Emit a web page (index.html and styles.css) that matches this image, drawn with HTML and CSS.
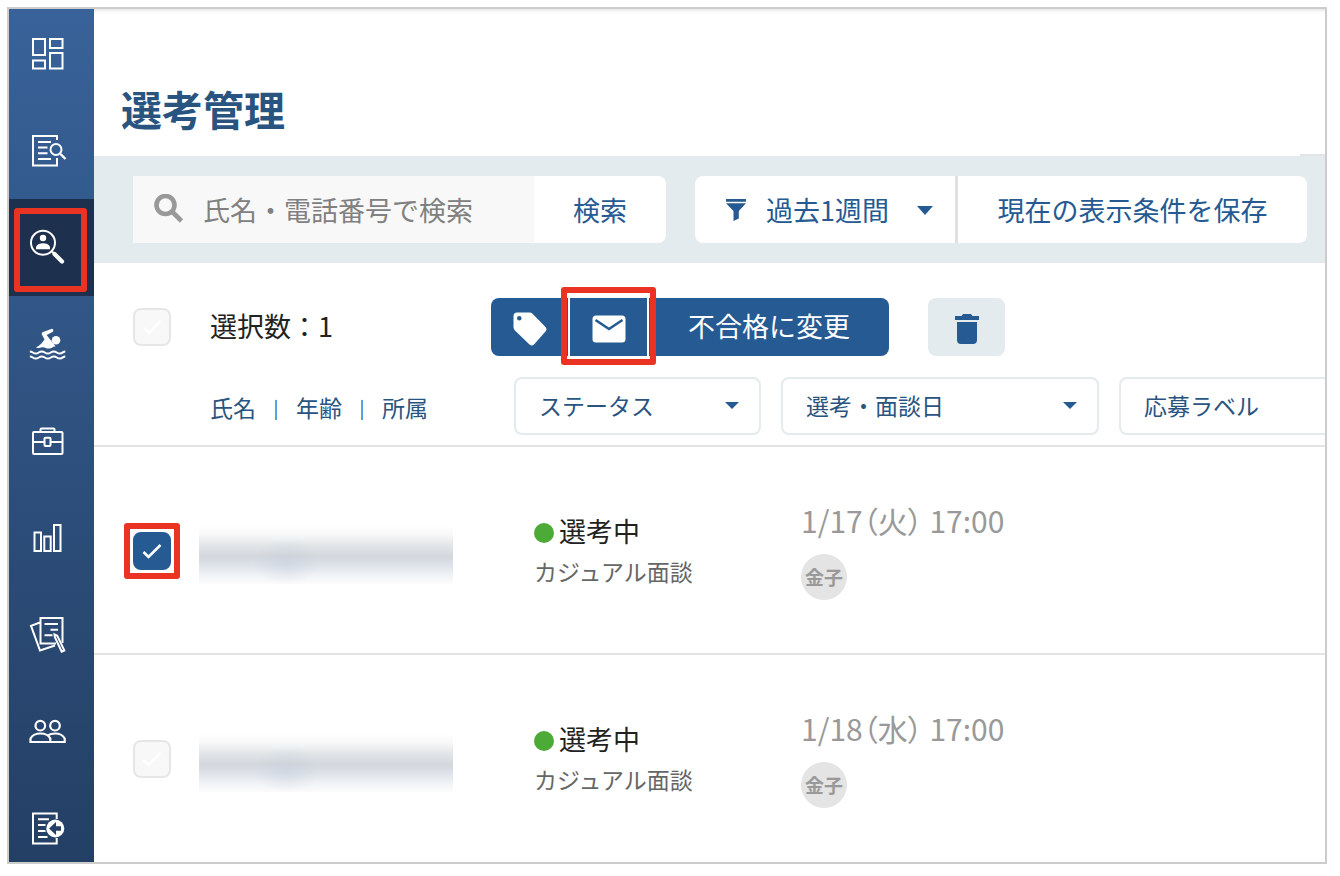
FILE: index.html
```html
<!DOCTYPE html>
<html lang="ja">
<head>
    <meta charset="UTF-8">
    <title>選考管理</title>
    <link rel="stylesheet" href="styles.css">
</head>
<body>
<div class="frame">
    <nav class="sidebar">
        <a href="#" class="nav-item" aria-label="ダッシュボード">
            <svg class="nav-icon" viewBox="0 0 38 39"><path d="M4 5h12v16H4zM21 5h12.500v9H21zM21 19h12.500v15.500H21zM4 26.500h12v8H4z"/></svg>
        </a>
        <a href="#" class="nav-item" aria-label="求人検索">
            <svg class="nav-icon" viewBox="0 0 38 39"><path d="M28 9V5H4v29.500h24V27M9 11h13M9 16.500h9.500M9 22.300h9.500M9 28h13"/><circle cx="27" cy="18.500" r="5.500"/><path d="M31.500 23l5 5" stroke-width="2.400"/></svg>
        </a>
        <a href="#" class="nav-item active" aria-label="選考管理">
            <svg class="nav-icon" viewBox="0 0 38 39"><circle cx="14" cy="14.700" r="12"/><circle class="solid" cx="14" cy="10" r="3.200"/><path class="solid" d="M7 21.200v-2.400c1-2.500 4-3.600 7-3.600s6 1.100 7 3.600v2.400z"/><path d="M23 23.500l2.500 2.500" stroke-width="2"/><path d="M25.500 26l7.500 7.500" stroke-width="4.200" stroke-linecap="round"/></svg>
            <span class="mark mark-nav"></span>
        </a>
        <a href="#" class="nav-item" aria-label="人材プール">
            <svg class="nav-icon" viewBox="0 0 38 39"><path class="solid" d="M23 3.800c1.600.4 1.800 2.400.6 3.100l-6 3 7.500 9.500 1.500 2.200c-2.500-.4-3.500 2-6.500 2-3.500 0-4-1.800-7-1.400-2 .3-3.500 1.200-6.100.5 2.500-2 5-2.800 8.500-8.200L13 9.800c-.7-1.300-.2-2.300 1-2.900z"/><circle class="solid" cx="27" cy="15.300" r="4.300"/><path d="M.800 26.500c3 0 3 2 6 2s3-2 6-2 3 2 6 2 3-2 6-2 3 2 6 2 3-2 5.500-2M.800 31.500c3 0 3 2 6 2s3-2 6-2 3 2 6 2 3-2 6-2 3 2 6 2 3-2 5.500-2"/></svg>
        </a>
        <a href="#" class="nav-item" aria-label="求人">
            <svg class="nav-icon" viewBox="0 0 38 39"><rect x="4" y="10" width="29.500" height="22" rx="1"/><path d="M11.500 10V7.500q0-1 1-1h12q1 0 1 1V10M4 20h11.500M21.500 20h12"/><rect x="15.500" y="15.800" width="6" height="8.200" rx="1"/></svg>
        </a>
        <a href="#" class="nav-item" aria-label="レポート">
            <svg class="nav-icon" viewBox="0 0 38 39"><path d="M5.500 13.500H12V32H5.500zM15.300 17.500h6.400V32h-6.400zM25 6h6.500v26H25z"/></svg>
        </a>
        <a href="#" class="nav-item" aria-label="評価シート">
            <svg class="nav-icon" viewBox="0 0 38 39"><path d="M27 27.500H11.500V2h22v25M11 6.500L2 9.800l9 24.700 15-5M15.500 8H29M21.500 13.700H29M15.500 19.300h8"/><path d="M25.500 18.500l2.800 1.300 7 14.600-2.600 1.200-6.800-14.300z"/></svg>
        </a>
        <a href="#" class="nav-item" aria-label="メンバー">
            <svg class="nav-icon" viewBox="0 0 38 39"><g stroke-width="2.200"><circle cx="11.300" cy="12.700" r="4.800"/><circle cx="26" cy="12.700" r="4.800"/><path d="M1.500 29h19.800v-3.500c-1.500-3-5.500-5-9.800-5s-8.500 2-10 5zM21.300 29h14.400v-3.500c-1.500-3-5.300-5-9.700-5-3 0-5.500.8-7.500 2.200"/></g></svg>
        </a>
        <a href="#" class="nav-item" aria-label="エントリー">
            <svg class="nav-icon" viewBox="0 0 38 39"><path d="M27.700 9V3.500H4v30h23.700V28M9 9.300h11M9 15h7.500M9 21h7.500M9 27h9.500"/><circle class="solid" cx="26.300" cy="18.500" r="9"/><path fill="#243f66" stroke="none" d="M20 18.500l7-6.500v4.200h5v4.600h-5V25z"/></svg>
        </a>
    </nav>

    <main class="main">
        <header class="page-head">
            <h1 class="page-title">選考管理</h1>
        </header>

        <div class="toolbar">
            <form class="search">
                <label class="search-field">
                    <svg class="search-icon" viewBox="0 0 32 32"><circle cx="12.500" cy="11" r="9"/><path d="M19 17.500l9.500 9.500"/></svg>
                    <input class="search-input" type="text" placeholder="氏名・電話番号で検索" aria-label="検索キーワード">
                </label>
                <button type="button" class="search-btn">検索</button>
            </form>
            <div class="period-group">
                <label class="period">
                    <svg class="filter-icon" viewBox="0 0 22 24"><path d="M1 1h20v2.800H1zM1 5.200h20L13.800 13v7.500L8.500 23V13z"/></svg>
                    <select class="period-select" aria-label="期間"><option>過去1週間</option></select>
                    <svg class="caret caret-lg" viewBox="0 0 16 9"><path d="M0 0h16L8 9z"/></svg>
                </label>
                <button type="button" class="save-btn">現在の表示条件を保存</button>
            </div>
        </div>

        <section class="list-head">
            <div class="columns">
                <label class="check"><input type="checkbox" aria-label="すべて選択"><svg viewBox="0 0 38 38"><path d="M11 20l5 5 11.500-12"/></svg></label>
                <div class="count">選択数：1</div>
                <div class="actions">
                    <div class="btn-group">
                        <button type="button" class="btn btn-icon" aria-label="ラベル">
                            <svg width="34" height="34" viewBox="0 0 34 34"><path fill="#fff" fill-rule="evenodd" d="M4 .5h12.500q1.800 0 3 1.200L32.500 15q2 2.300 0 4.500L21 32.500q-2.200 2-4.500 0L1.700 18.300Q.5 17 .5 15.300V4Q.5.500 4 .500zM6.300 4a2.300 2.300 0 1 0 .01 4.600A2.300 2.300 0 1 0 6.300 4z"/></svg>
                        </button>
                        <button type="button" class="btn btn-icon" aria-label="メール">
                            <svg width="34" height="28" viewBox="0 0 34 28"><rect x=".5" y=".5" width="33" height="27" rx="3.500" fill="#fff"/><path d="M3.500 5L17 14 30.500 5" fill="none" stroke="#255a92" stroke-width="2.600"/></svg>
                            <span class="mark mark-mail"></span>
                        </button>
                        <button type="button" class="btn btn-text">不合格に変更</button>
                    </div>
                    <button type="button" class="btn-trash" aria-label="削除">
                        <svg width="24" height="30" viewBox="0 0 24 30"><path fill="#255a92" d="M8 0h8l1.500 2H24v4H0V2h6.500zM2 8h20v18q0 4-4 4H6q-4 0-4-4z"/></svg>
                    </button>
                </div>
            </div>
            <div class="columns">
                <div class="person-head">氏名<span class="sep">|</span>年齢<span class="sep">|</span>所属</div>
                <label class="filter">
                    <select class="filter-select" aria-label="ステータス"><option>ステータス</option></select>
                    <svg class="caret" viewBox="0 0 14 7"><path d="M0 0h14L7 7z"/></svg>
                </label>
                <label class="filter">
                    <select class="filter-select" aria-label="選考・面談日"><option>選考・面談日</option></select>
                    <svg class="caret" viewBox="0 0 14 7"><path d="M0 0h14L7 7z"/></svg>
                </label>
                <label class="filter filter-label">
                    <select class="filter-select" aria-label="応募ラベル"><option>応募ラベル</option></select>
                </label>
            </div>
        </section>

        <section class="row columns">
            <label class="check"><input type="checkbox" checked aria-label="候補者を選択"><svg viewBox="0 0 38 38"><path d="M10.500 20l5 5L27.500 13"/></svg><span class="mark mark-check"></span></label>
            <div class="masked"></div>
            <div class="status">
                <div class="status-name"><span class="dot"></span>選考中</div>
                <div class="status-step">カジュアル面談</div>
            </div>
            <div class="schedule">
                <div class="date">1/17（火） 17:00</div>
                <div class="avatar">金子</div>
            </div>
        </section>

        <section class="row columns">
            <label class="check"><input type="checkbox" aria-label="候補者を選択"><svg viewBox="0 0 38 38"><path d="M10.500 20l5 5L27.500 13"/></svg></label>
            <div class="masked"></div>
            <div class="status">
                <div class="status-name"><span class="dot"></span>選考中</div>
                <div class="status-step">カジュアル面談</div>
            </div>
            <div class="schedule">
                <div class="date">1/18（水） 17:00</div>
                <div class="avatar">金子</div>
            </div>
        </section>
    </main>
</div>
</body>
</html>
```
FILE: styles.css
```css
*{
    box-sizing: border-box;
    margin: 0;
    padding: 0;
}
body{
    padding: 7px 13px 13px 7px;
    background: #fff;
    color: #222;
    font-family: "Noto Sans CJK JP", sans-serif;
    font-size: 27px;
    line-height: 40px;
}
button, input, select{
    border: 0;
    font: inherit;
    color: inherit;
    background: none;
}
select{
    appearance: none;
    cursor: pointer;
}
.frame{
    display: flex;
    border: 2px solid #ccc;
    overflow: hidden;
}

/* sidebar */
.sidebar{
    flex: none;
    width: 85px;
    contain: size;
    overflow: hidden;
    background: linear-gradient(#386299, #243f64);
}
.nav-item{
    position: relative;
    display: flex;
    align-items: center;
    justify-content: center;
    height: 97px;
    padding-right: 7px;
}
.nav-item:first-child{
    margin-top: -4px;
}
.nav-item.active{
    background: #1d304d;
}
.nav-icon{
    width: 38px;
    height: 39px;
    fill: none;
    stroke: #fff;
    stroke-width: 2;
}
.nav-icon .solid{
    fill: #fff;
    stroke: none;
}

/* red marks */
.mark{
    position: absolute;
    border: 6px solid #eb3323;
    border-radius: 3px;
}
.mark-nav{
    inset: 9px 7px 4px 5px;
}
.mark-mail{
    inset: -11px -9px -9px;
    z-index: 1;
}
.mark-check{
    inset: -9px;
}

.main{
    flex: 1;
    min-width: 0;
    overflow: hidden;
}
.page-head{
    height: 147px;
    padding: 69px 27px 0;
    box-shadow: inset 0 4px 4px -3px #ddd;
}
.page-title{
    font-size: 41px;
    line-height: 60px;
    font-weight: bold;
    color: #29547f;
}

.toolbar{
    position: relative;
    display: flex;
    gap: 29px;
    padding: 20px 18px 20px 39px;
    background: #e4ebef;
    color: #255a92;
}
.toolbar:before{
    content: "";
    position: absolute;
    top: -2px;
    right: 0;
    width: 25px;
    height: 2px;
    background: #e2e4e5;
}
.search{
    flex: 1;
    display: flex;
    min-width: 0;
    height: 67px;
}
.search-field{
    flex: 1;
    display: flex;
    align-items: center;
    gap: 18px;
    min-width: 0;
    padding-left: 20px;
    background: #f8f8f8;
}
.search-icon{
    flex: none;
    width: 32px;
    height: 32px;
    fill: none;
    stroke: #999;
    stroke-width: 4.6;
}
.search-input{
    flex: 1;
    min-width: 0;
}
.search-input::placeholder{
    color: #808080;
    opacity: 1;
}
.search-btn{
    width: 132px;
    background: #fff;
    border-radius: 0 8px 8px 0;
}
.period-group{
    display: flex;
    gap: 3px;
    background: #e0e0e0;
    border-radius: 8px;
}
.period{
    position: relative;
    display: flex;
    align-items: center;
    width: 260px;
    padding-left: 30px;
    background: #fff;
    border-radius: 8px 0 0 8px;
}
.filter-icon{
    width: 22px;
    height: 24px;
    fill: #255a92;
}
.period-select{
    flex: 1;
    padding-left: 19px;
}
.caret{
    position: absolute;
    top: 50%;
    right: 22px;
    width: 14px;
    height: 7px;
    margin-top: -4px;
    fill: #255a92;
    pointer-events: none;
}
.caret-lg{
    width: 16px;
    height: 9px;
}
.save-btn{
    width: 349px;
    background: #fff;
    border-radius: 0 8px 8px 0;
}

/* list */
.columns{
    display: grid;
    grid-template-columns: 66px 315px 267px 338px 1fr;
    align-items: center;
    padding-left: 39px;
}
.list-head{
    display: grid;
    gap: 21px;
    padding: 35px 0 10px;
    border-bottom: 2px solid #e4e4e4;
}
.check{
    position: relative;
    width: 38px;
    height: 38px;
}
.check input{
    appearance: none;
    display: block;
    width: 38px;
    height: 38px;
    border: 2px solid #e6e6e6;
    border-radius: 8px;
    background: #f8f8f8;
}
.check input:checked{
    border-color: #255a92;
    background: #255a92;
}
.check svg{
    position: absolute;
    inset: 0;
    fill: none;
    stroke: #fff;
    stroke-width: 2.6;
    pointer-events: none;
}
.count{
    padding: 0 0 3px 11px;
}
.actions{
    grid-column: 3 / -1;
    display: flex;
    gap: 39px;
    margin-left: -23px;
}
.btn-group{
    display: flex;
    gap: 2px;
}
.btn{
    position: relative;
    height: 58px;
    background: #255a92;
    color: #fff;
}
.btn:first-child{
    border-radius: 8px 0 0 8px;
}
.btn:last-child{
    border-radius: 0 8px 8px 0;
}
.btn-icon, .btn-trash{
    display: flex;
    align-items: center;
    justify-content: center;
    width: 77px;
    height: 58px;
    padding-top: 4px;
}
.btn-text{
    width: 240px;
    padding-bottom: 2px;
}
.btn-trash{
    background: #e4ebef;
    border-radius: 8px;
}
.person-head{
    grid-column: 1 / 3;
    padding: 2px 0 0 77px;
    font-size: 23px;
    color: #29547f;
}
.sep{
    display: inline-block;
    width: 40px;
    font-size: 18px;
    text-align: center;
    vertical-align: top;
}
.filter{
    position: relative;
    display: block;
    height: 58px;
    margin-right: 20px;
}
.filter-select{
    width: 100%;
    height: 58px;
    padding: 0 23px 3px;
    border: 2px solid #e4ebef;
    border-radius: 8px;
    font-size: 23px;
    color: #29547f;
}
.filter-label{
    width: 248px;
}

.row{
    height: 208px;
    padding-top: 1px;
    border-bottom: 2px solid #e4e4e4;
}
.row:last-child{
    height: 207px;
    border-bottom: 0;
}
.masked{
    width: 254px;
    height: 58px;
    margin-top: 8px;
    background:
        radial-gradient(ellipse 34px 24px at 88px 36px, rgba(190, 203, 218, .4), transparent),
        linear-gradient(#fff, #f7f8f8 15%, #e2e5e8 34%, #d4d8dd 52%, #dde1e8 66%, #f0f2f5 84%, #fcfcfd);
}
.status, .schedule{
    padding-left: 20px;
}
.status-name{
    display: flex;
    align-items: center;
    gap: 5px;
}
.dot{
    width: 20px;
    height: 20px;
    margin-top: 4px;
    border-radius: 50%;
    background: #4caa37;
}
.status-step{
    font-size: 23px;
    color: #666;
}
.date{
    font-size: 30px;
    line-height: 36px;
    font-feature-settings: "palt";
    white-space: nowrap;
    color: #999;
}
.avatar{
    width: 46px;
    height: 46px;
    margin-top: 16px;
    border-radius: 50%;
    background: #e4e4e4;
    color: #999;
    font-size: 19px;
    font-weight: bold;
    line-height: 46px;
    text-align: center;
}
```
